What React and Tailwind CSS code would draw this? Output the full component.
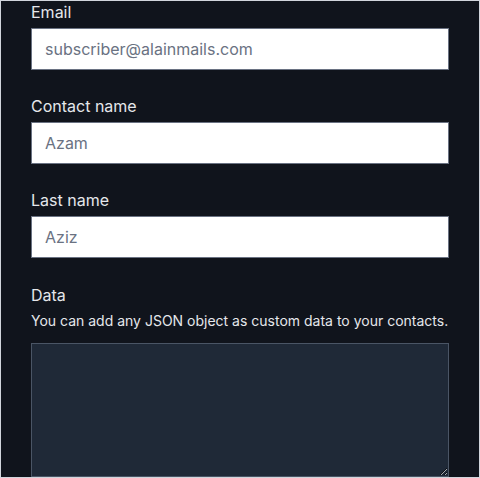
import React from "react";

function Field({ label, placeholder }) {
  return (
    <div>
      <label className="block text-base leading-5 text-gray-200 mb-[6px]">{label}</label>
      <input
        type="text"
        placeholder={placeholder}
        className="w-full h-[42px] px-[13px] bg-white border border-gray-500 text-base text-gray-700 placeholder-gray-500 focus:outline-none"
      />
    </div>
  );
}

export default function App() {
  return (
    <div
      className="h-[478px] w-[480px] overflow-hidden bg-[#10141c] border border-gray-300"
      style={{ fontFamily: "Inter, 'Noto Sans', sans-serif" }}
    >
      <div className="px-[30px] pt-[1px] flex flex-col gap-[26px]">
        <Field label="Email" placeholder="subscriber@alainmails.com" />
        <Field label="Contact name" placeholder="Azam" />
        <Field label="Last name" placeholder="Aziz" />
        <div className="pt-[1px]">
          <label className="block text-base leading-5 text-gray-200">Data</label>
          <p className="mt-[6px] text-sm leading-5 text-gray-200">
            You can add any JSON object as custom data to your contacts.
          </p>
          <textarea className="mt-3 block w-full h-[134px] bg-[#1f2937] border border-gray-600 text-gray-200 focus:outline-none" />
        </div>
      </div>
    </div>
  );
}
